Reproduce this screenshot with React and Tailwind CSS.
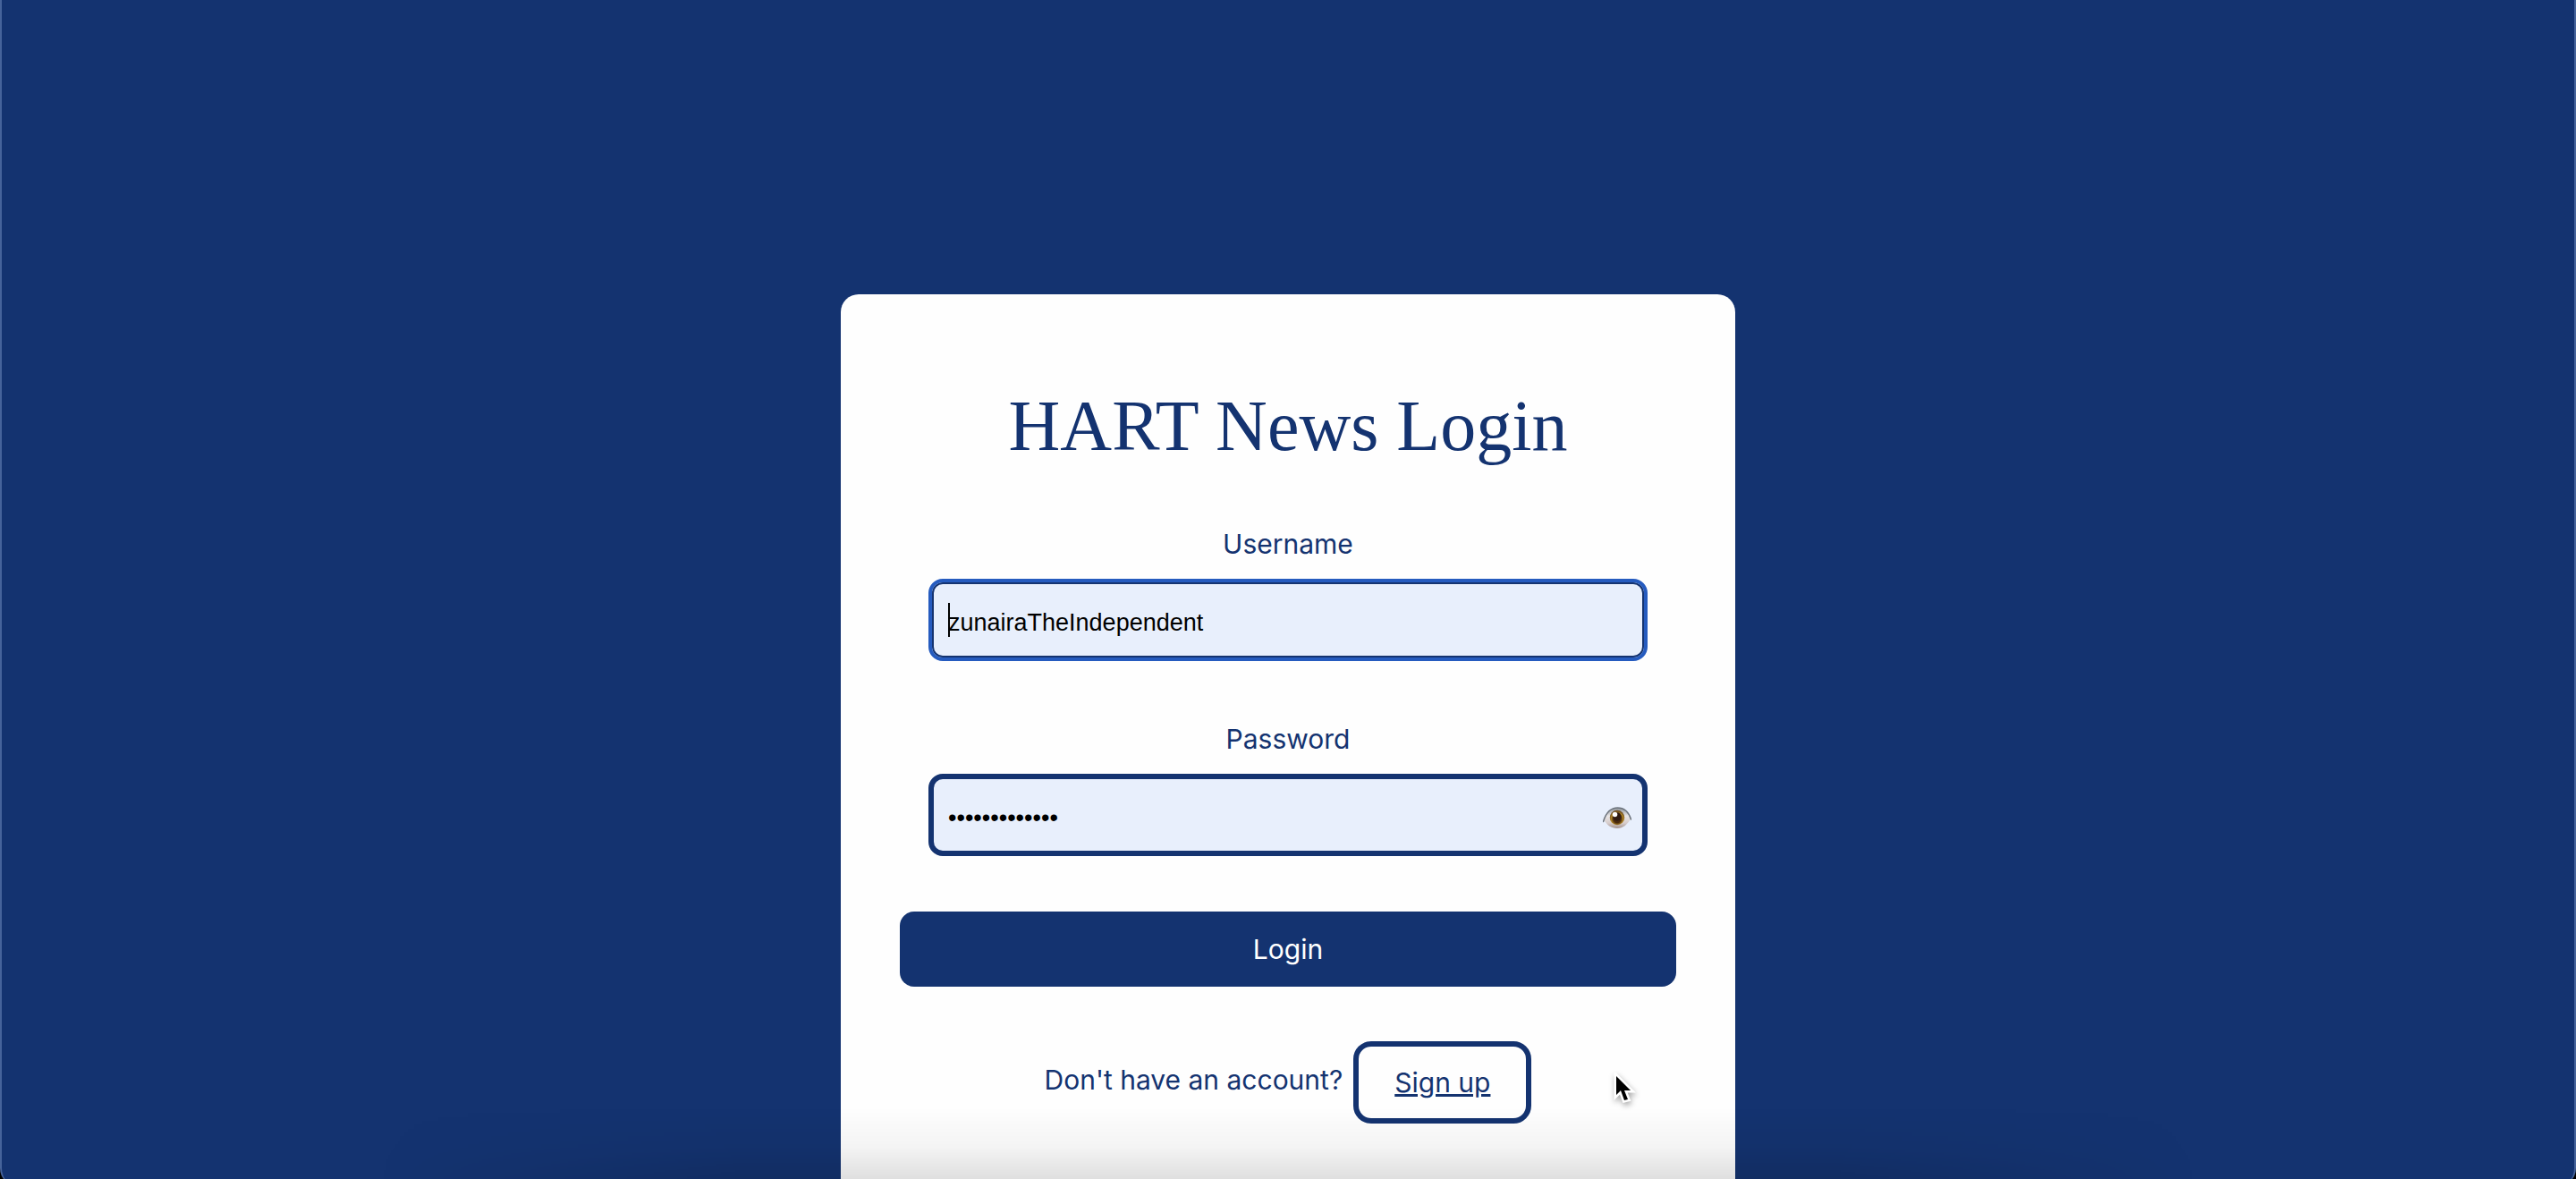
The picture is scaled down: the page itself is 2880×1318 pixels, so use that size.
import React, { useState } from "react";

const FIELD =
  "block h-[92px] w-full rounded-2xl bg-[#e8effc] font-[Liberation_Sans,Arial,sans-serif] text-[27px] text-black outline-none";

function EyeIcon() {
  return (
    <svg viewBox="0 0 64 50" className="h-[25px] w-8" aria-hidden="true">
      <defs>
        <linearGradient id="eye-white" x1="0" y1="0" x2="0" y2="1">
          <stop offset="0" stopColor="#8b9299" />
          <stop offset="0.4" stopColor="#e9e6e6" />
          <stop offset="0.75" stopColor="#d6cccb" />
          <stop offset="1" stopColor="#a3928d" />
        </linearGradient>
        <radialGradient id="eye-iris" cx="0.5" cy="0.6" r="0.55">
          <stop offset="0.45" stopColor="#4a2a0c" />
          <stop offset="0.75" stopColor="#b08526" />
          <stop offset="1" stopColor="#6b4a1e" />
        </radialGradient>
      </defs>
      <path
        d="M1 27C9 11 19 2 33 2s24 9 30 24C54 40 45 48 32 48S9 41 1 27Z"
        fill="url(#eye-white)"
      />
      <path
        d="M1 33C7 13 19 2 33 2s25 10 30 26"
        fill="none"
        stroke="#6f767f"
        strokeWidth="3"
        strokeLinecap="round"
      />
      <circle cx="32" cy="24" r="16.5" fill="url(#eye-iris)" />
      <circle cx="32" cy="22" r="9.5" fill="#2f1b12" />
      <circle cx="27" cy="17" r="5.5" fill="#fff" />
    </svg>
  );
}

function Pointer() {
  return (
    <svg
      viewBox="0 0 26 36"
      className="pointer-events-none absolute top-[1199px] left-[calc(50%+364px)] h-9 w-[26px] drop-shadow-[1px_3px_3px_rgba(0,0,0,0.35)]"
      aria-hidden="true"
    >
      <path
        d="M3 4v21l5-5 4 11 4-1-4-10h7Z"
        fill="#000"
        stroke="#fff"
        strokeWidth="5"
        paintOrder="stroke"
      />
    </svg>
  );
}

export default function App() {
  const [username, setUsername] = useState("zunairaTheIndependent");
  const [password, setPassword] = useState("independent12");
  const [visible, setVisible] = useState(false);

  return (
    <div className="h-screen overflow-hidden bg-black">
      <main className="relative flex h-[calc(100vh+8px)] flex-col items-center overflow-hidden rounded-b-[20px] border-x-2 border-[#46639a] bg-[#143370] pt-[329px] font-[Inter,sans-serif] text-[30px] leading-10 text-[#143370]">
        <section className="w-full max-w-[1000px] flex-1 rounded-t-[20px] bg-[#fefefe] px-[66px] pt-[99px]">
          <h1 className="mb-16 text-center font-[Liberation_Serif,Times_New_Roman,serif] text-[80px] leading-[96px]">
            HART News Login
          </h1>
          <form onSubmit={(e) => e.preventDefault()}>
            <div className="mx-8 mb-[67px]">
              <label htmlFor="username" className="mb-[19px] block text-center">
                Username
              </label>
              <div className="relative">
                <input
                  id="username"
                  type="text"
                  value={username}
                  onChange={(e) => setUsername(e.target.value)}
                  className={`${FIELD} border-4 border-[#255bbf] px-[18px] pt-1.5 shadow-[inset_0_0_0_2px_#143370]`}
                />
                <span className="absolute top-[27px] left-[22px] h-[38px] w-0.5 bg-black" />
              </div>
            </div>
            <div className="mx-8 mb-[62px]">
              <label htmlFor="password" className="mb-[19px] block text-center">
                Password
              </label>
              <div className="relative">
                <input
                  id="password"
                  type={visible ? "text" : "password"}
                  value={password}
                  onChange={(e) => setPassword(e.target.value)}
                  className={`${FIELD} border-6 border-[#143370] px-4 pt-1.5`}
                />
                <button
                  type="button"
                  aria-label="Show password"
                  onClick={() => setVisible(!visible)}
                  className="absolute inset-y-0 right-[18px] flex items-center pt-1.5"
                >
                  <EyeIcon />
                </button>
              </div>
            </div>
            <button
              type="submit"
              className="mb-[61px] block h-[84px] w-full rounded-2xl bg-[#143370] text-white"
            >
              Login
            </button>
          </form>
          <div className="flex items-center justify-center gap-3">
            <p className="mb-1.5">Don't have an account?</p>
            <a
              href="#signup"
              className="flex h-[92px] items-center rounded-[20px] border-6 border-[#143370] px-10 underline"
            >
              Sign up
            </a>
          </div>
        </section>
        <div className="pointer-events-none absolute inset-x-[420px] bottom-0 h-[88px] bg-linear-to-b from-transparent via-black/4 to-black/14 mask-x-from-80%" />
        <Pointer />
      </main>
    </div>
  );
}
